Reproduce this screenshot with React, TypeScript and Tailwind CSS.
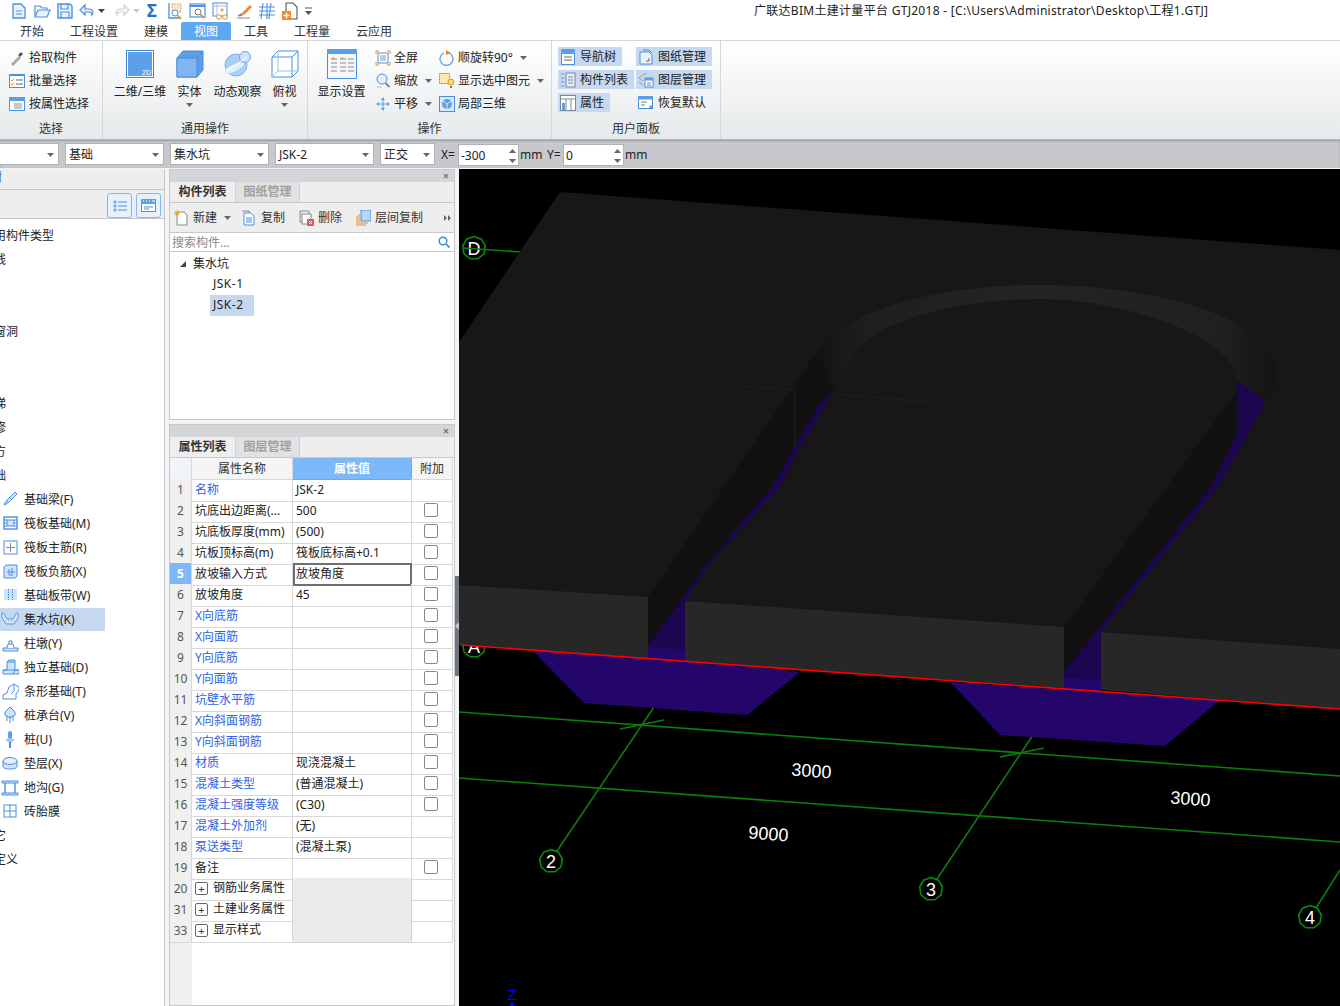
import type { ReactNode } from 'react'

const BLUE = '#4a90e2'
const LIGHT = '#cfe3f9'
const MID = '#5b9fe8'

function Ico({ w = 18, h = 18, children }: { w?: number; h?: number; children: ReactNode }) {
  return (
    <svg width={w} height={h} viewBox={`0 0 ${w} ${h}`} className="shrink-0" fill="none">
      {children}
    </svg>
  )
}

function Caret({ className = 'text-[#555]' }: { className?: string }) {
  return (
    <svg width="7" height="4" viewBox="0 0 7 4" className={`shrink-0 ${className}`}>
      <path d="M0 0h7L3.5 4z" fill="currentColor" />
    </svg>
  )
}

// quick access bar
const quickIcons: ReactNode[] = [
  <Ico key="new">
    <path d="M3 2h8l4 4v10H3z" fill="#e8f2fd" stroke={BLUE} strokeWidth="1.3" />
    <path d="M6 9h6M6 12h6" stroke={BLUE} />
  </Ico>,
  <Ico key="open">
    <path d="M2 14V4h5l2 2h5v2" stroke={BLUE} strokeWidth="1.2" />
    <path d="M2 15l3-7h12l-3 7z" fill="#e8f2fd" stroke={BLUE} strokeWidth="1.2" />
  </Ico>,
  <Ico key="save">
    <path d="M2 2h12l2 2v12H2z" fill="#e8f2fd" stroke={BLUE} strokeWidth="1.4" />
    <path d="M5 2v5h7V2M5 16v-6h8v6" stroke={BLUE} strokeWidth="1.2" />
  </Ico>,
]

function QuickBar() {
  return (
    <div className="flex items-center h-[22px] pl-[10px]">
      <div className="flex gap-[5px]">{quickIcons}</div>
      <div className="flex items-center ml-[4px]">
        <Ico>
          <path d="M7 3L2 8l5 5V10h4c2 0 3 1 3 3 2-3 1-6-3-6H7z" fill="#e8f2fd" stroke={BLUE} strokeWidth="1.2" />
        </Ico>
        <Caret className="text-[#444] ml-[2px]" />
      </div>
      <div className="flex items-center ml-[8px]">
        <Ico>
          <path d="M11 3l5 5-5 5V10H7c-2 0-3 1-3 3-2-3-1-6 3-6h4z" fill="#fafafa" stroke="#d0d0d0" strokeWidth="1.2" />
        </Ico>
        <Caret className="text-[#c8c8c8] ml-[2px]" />
      </div>
      <span className="ml-[3px] w-[18px] text-center text-[#2a6fbe] text-[17px] leading-[18px] font-bold">Σ</span>
      <div className="flex gap-[5px] ml-[5px]">
        <Ico>
          <path d="M3 1v15h12" stroke={BLUE} strokeWidth="1.3" />
          <rect x="6" y="2" width="9" height="8" fill="#fbe3d0" stroke="#e08a3c" strokeWidth=".8" strokeDasharray="1.5 1" />
          <circle cx="9" cy="11" r="3" fill="#fff" stroke={BLUE} />
          <path d="M11 13l4 4" stroke="#ee9a22" strokeWidth="2" />
        </Ico>
        <Ico>
          <rect x="1" y="2" width="15" height="13" fill="#fff" stroke={BLUE} strokeWidth="1.2" />
          <path d="M1 4h15" stroke={BLUE} strokeWidth="2" />
          <circle cx="9" cy="10" r="3" fill="#fff" stroke="#777" />
          <path d="M11 12l4 4" stroke="#ee9a22" strokeWidth="2" />
        </Ico>
        <Ico>
          <rect x="1" y="1" width="14" height="13" fill="#fff" stroke={BLUE} strokeWidth="1" />
          <path d="M1 4h14M5 1v13" stroke="#9cc4ee" />
          <path d="M8 8h4M10 6v4" stroke="#ee9a22" />
          <circle cx="7" cy="15" r="2.3" fill="#fff" stroke="#d9902f" />
          <circle cx="13" cy="15" r="2.3" fill="#fff" stroke="#d9902f" />
        </Ico>
        <Ico>
          <path d="M7 11l8-8 2 2-8 8z" fill="#ee8a22" />
          <path d="M2 16h13" stroke="#888" />
          <path d="M3 14c0-2 3-2 4-3l1 2c-1 1-3 2-5 1z" fill="#888" />
        </Ico>
        <Ico>
          <path d="M5 1L3 17M13 1l-2 16M1 5h16M1 9h16M1 13h16" stroke={BLUE} strokeWidth="1.1" />
          <path d="M9 1v16" stroke={BLUE} strokeWidth="1.1" />
        </Ico>
        <Ico>
          <path d="M5 9V1h7l4 4v12h-6" fill="#fff" stroke="#555" strokeWidth="1.1" />
          <rect x="1" y="9" width="9" height="9" fill="#f08a24" />
          <path d="M5.5 10.5v6M2.5 13.5h6" stroke="#fff" strokeWidth="1.4" />
        </Ico>
      </div>
      <svg width="9" height="8" viewBox="0 0 9 8" className="ml-[5px]">
        <path d="M1 1h7" stroke="#555" />
        <path d="M1 4h7L4.5 8z" fill="#555" />
      </svg>
      <div className="absolute left-[754px] top-[3px] text-[12px] leading-[16px] tracking-[0.29px] text-[#222] whitespace-nowrap">
        广联达BIM土建计量平台 GTJ2018 - [C:\Users\Administrator\Desktop\工程1.GTJ]
      </div>
    </div>
  )
}

const tabs = ['开始', '工程设置', '建模', '视图', '工具', '工程量', '云应用']

function TabBar() {
  return (
    <div className="flex h-[19px] pl-[7px] border-b border-[#d4d6d9]">
      {tabs.map(t => (
        <div
          key={t}
          className={`px-[13px] text-[12px] leading-[20px] rounded-t-[2px] ${
            t === '视图' ? 'bg-[#5ea8f2] text-white' : 'text-[#333]'
          }`}
        >
          {t}
        </div>
      ))}
    </div>
  )
}

function Group({ w, label, children }: { w: number; label: string; children: ReactNode }) {
  return (
    <div className="flex flex-col border-r border-[#d5d8db] shrink-0" style={{ width: w }}>
      <div className="flex-1 flex">{children}</div>
      <div className="h-[21px] text-center text-[12px] leading-[22px] text-[#333]">{label}</div>
    </div>
  )
}

function BigBtn({ w, icon, label, caret }: { w: number; icon: ReactNode; label: string; caret?: boolean }) {
  return (
    <div className="flex flex-col items-center pt-[8px] shrink-0" style={{ width: w }}>
      <div className="h-[30px] flex items-center justify-center">{icon}</div>
      <div className="text-[12px] leading-[16px] mt-[5px] text-[#222] whitespace-nowrap">{label}</div>
      {caret && <Caret className="text-[#666] mt-[3px]" />}
    </div>
  )
}

function SmallBtn({ icon, label, caret, active, w, tight }: { icon: ReactNode; label: string; caret?: boolean; active?: boolean; w?: number; tight?: boolean }) {
  return (
    <div
      className={`flex items-center h-[19px] mb-[4px] text-[12px] text-[#222] whitespace-nowrap ${active ? 'bg-[#c6d9f1]' : ''}`}
      style={w ? { width: w } : undefined}
    >
      <span className={`w-[19px] flex shrink-0 ${tight ? 'justify-start' : 'justify-center'}`}>{icon}</span>
      <span className={tight ? '' : 'ml-[3px]'}>{label}</span>
      {caret && <Caret className="text-[#666] ml-[7px]" />}
    </div>
  )
}

const tableIcon = (
  <Ico w={30} h={30}>
    <rect x=".5" y=".5" width="29" height="29" fill="#f4f6f9" stroke={BLUE} />
    <rect x="0" y="0" width="30" height="5" fill={MID} />
    <path d="M4 10h6M4 14h6M4 18h6M4 22h6M13 10h6M13 14h6M13 18h6M13 22h6M21 10h6M21 14h6M21 18h6M21 22h6" stroke="#8a8a8a" />
    <path d="M4 9l1 1 2-2M13 9l1 1 2-2" stroke="#ee8a22" />
  </Ico>
)

function Ribbon() {
  return (
    <div className="flex h-[98px] bg-gradient-to-b from-white to-[#e6e9eb]">
      <Group w={103} label="选择">
        <div className="pt-[7px] pl-[7px]">
          <SmallBtn
            label="拾取构件"
            icon={
              <Ico w={16} h={16}>
                <path d="M2 14l8-8 2 2-8 8z" fill="#aaa" />
                <path d="M9 5l3-3 2 2-3 3z" fill="#555" />
              </Ico>
            }
          />
          <SmallBtn
            label="批量选择"
            icon={
              <Ico w={16} h={14}>
                <rect x=".5" y=".5" width="15" height="13" fill="#fff" stroke={BLUE} />
                <path d="M0 1h16" stroke={BLUE} strokeWidth="2" />
                <path d="M2 6l1 1 2-2M2 10l1 1 2-2" stroke="#ee8a22" />
                <path d="M7 6h7M7 10h7" stroke="#666" />
              </Ico>
            }
          />
          <SmallBtn
            label="按属性选择"
            icon={
              <Ico w={16} h={14}>
                <rect x=".5" y=".5" width="15" height="13" fill="#fff" stroke={BLUE} />
                <rect x="0" y="0" width="16" height="4" fill={MID} />
                <path d="M5 7h8M5 9h8M5 11h8" stroke="#777" strokeWidth=".8" />
              </Ico>
            }
          />
        </div>
      </Group>
      <Group w={205} label="通用操作">
        <div className="flex">
          <BigBtn
            w={74}
            label="二维/三维"
            icon={
              <Ico w={28} h={28}>
                <rect x=".5" y=".5" width="27" height="27" fill="#fff" stroke="#3e86d8" />
                <rect x="2" y="2" width="24" height="24" fill="#5d9fe9" />
                <text x="25" y="25" fill="#fff" fontSize="7" textAnchor="end" fontFamily="'Liberation Sans', sans-serif">
                  2D
                </text>
              </Ico>
            }
          />
          <BigBtn
            w={25}
            label="实体"
            caret
            icon={
              <Ico w={28} h={28}>
                <path d="M1 8l6-7h20v19l-6 7H1z" fill={MID} stroke="#4a8ad8" />
                <path d="M1 8h20v19H1z" fill="#80b5f0" stroke="#4a8ad8" />
                <path d="M21 8l6-7" stroke="#4a8ad8" />
              </Ico>
            }
          />
          <BigBtn
            w={71}
            label="动态观察"
            icon={
              <Ico w={29} h={26}>
                <circle cx="13" cy="14" r="11" fill="#a9cdf4" stroke="#7eb0ea" />
                <ellipse cx="11" cy="17" rx="11" ry="3.5" transform="rotate(-25 11 17)" fill="#e1eefb" />
                <circle cx="22" cy="6" r="5.5" fill="#cfe3f9" stroke="#6aa5e8" />
                <path d="M4 20L24 6" stroke="#fff" />
              </Ico>
            }
          />
          <BigBtn
            w={23}
            label="俯视"
            caret
            icon={
              <Ico w={28} h={28}>
                <path d="M1 7l6-6h20v20l-6 6H1z" fill="#fff" stroke={BLUE} />
                <path d="M1 7h20v20M21 7l6-6" stroke={BLUE} />
                <path d="M7 1v20h20M7 21l-6 6" stroke="#9cc4ee" />
              </Ico>
            }
          />
        </div>
      </Group>
      <Group w={244} label="操作">
        <div className="flex">
          <BigBtn w={67} label="显示设置" icon={tableIcon} />
          <div className="pt-[7px] w-[64px] shrink-0">
            <SmallBtn
              tight
              label="全屏"
              icon={
                <Ico w={16} h={16}>
                  <path d="M1 4V1h3M12 1h3v3M15 12v3h-3M4 15H1v-3" stroke="#ee8a22" />
                  <rect x="3" y="3" width="10" height="10" fill="#fff" stroke={BLUE} />
                  <path d="M5 6h6M5 8h6M5 10h6" stroke="#777" strokeWidth=".8" />
                </Ico>
              }
            />
            <SmallBtn
              tight
              label="缩放"
              caret
              icon={
                <Ico w={16} h={16}>
                  <circle cx="7" cy="6" r="5" fill="#e8f2fd" stroke={BLUE} />
                  <path d="M10.5 10l4 4" stroke="#888" strokeWidth="2" />
                  <path d="M2 14h4" stroke="#ee8a22" strokeDasharray="1.5 1" />
                </Ico>
              }
            />
            <SmallBtn
              tight
              label="平移"
              caret
              icon={
                <Ico w={16} h={16}>
                  <path d="M8 1l2 3H6zM8 15l2-3H6zM1 8l3-2v4zM15 8l-3-2v4z" fill={MID} />
                  <path d="M4 8h8M8 4v8" stroke={MID} />
                </Ico>
              }
            />
          </div>
          <div className="pt-[7px]">
            <SmallBtn
              tight
              label="顺旋转90°"
              caret
              icon={
                <Ico w={16} h={16}>
                  <path d="M10 3a6.5 6.5 0 1 1-5 0" stroke={MID} strokeWidth="1.3" />
                  <path d="M7 0l5 3-5 2z" fill="#ee8a22" />
                </Ico>
              }
            />
            <SmallBtn
              tight
              label="显示选中图元"
              caret
              icon={
                <Ico w={16} h={16}>
                  <rect x=".5" y=".5" width="10" height="10" fill="#fde9b0" stroke="#888" strokeDasharray="2 1" />
                  <circle cx="12" cy="9" r="3" fill="#ffd966" stroke="#c9a227" />
                  <path d="M11 13h2v2h-2z" fill="#777" />
                </Ico>
              }
            />
            <SmallBtn
              tight
              label="局部三维"
              icon={
                <Ico w={16} h={16}>
                  <rect x=".5" y=".5" width="15" height="15" fill="#dbe9f9" stroke={BLUE} />
                  <circle cx="8" cy="8" r="5" fill={MID} />
                  <path d="M8 8V13M4 5l4 3 4-3" stroke="#dbe9f9" />
                </Ico>
              }
            />
          </div>
        </div>
      </Group>
      <Group w={169} label="用户面板">
        <div className="flex pl-[6px] pt-[6px]">
          <div className="w-[78px] shrink-0">
            <SmallBtn
              w={64}
              active
              label="导航树"
              icon={
                <Ico w={14} h={16}>
                  <rect x=".5" y=".5" width="13" height="15" fill="#fff" stroke={BLUE} />
                  <rect x="0" y="0" width="14" height="5" fill={MID} />
                  <path d="M3 8h8M3 11h8" stroke="#666" />
                </Ico>
              }
            />
            <SmallBtn
              w={76}
              active
              label="构件列表"
              icon={
                <Ico w={16} h={16}>
                  <path d="M1 2h3M1 6h3M1 10h3M1 14h3" stroke={MID} />
                  <rect x="6" y="1" width="9" height="14" fill="#e5eefa" stroke="#7a8a9a" />
                  <path d="M8 5h5M8 8h5M8 11h5" stroke="#7a8a9a" />
                </Ico>
              }
            />
            <SmallBtn
              w={52}
              active
              label="属性"
              icon={
                <Ico w={16} h={16}>
                  <rect x=".5" y=".5" width="15" height="15" fill="#fff" stroke="#7a8a9a" />
                  <path d="M1 4h14M6 4v11M11 4v11" stroke="#7a8a9a" />
                  <rect x="2" y="8" width="3" height="7" fill={MID} />
                </Ico>
              }
            />
          </div>
          <div className="shrink-0">
            <SmallBtn
              w={76}
              active
              label="图纸管理"
              icon={
                <Ico w={16} h={16}>
                  <path d="M2 3h9l3 3v9H2z" fill="#eaf2fc" stroke={BLUE} />
                  <path d="M5 1h6l3 3" stroke={BLUE} />
                  <path d="M8 12h3v-3" stroke="#666" />
                </Ico>
              }
            />
            <SmallBtn
              w={76}
              active
              label="图层管理"
              icon={
                <Ico w={16} h={16}>
                  <path d="M1 6l5-4h3M1 6l4 3M1 10l4 3" stroke="#999" />
                  <rect x="7" y="6" width="8" height="9" fill="#fff" stroke={BLUE} />
                  <rect x="7" y="6" width="8" height="2.5" fill={MID} />
                  <path d="M9 11h4M9 13h4" stroke="#666" strokeWidth=".8" />
                </Ico>
              }
            />
            <SmallBtn
              w={76}
              label="恢复默认"
              icon={
                <Ico w={16} h={16}>
                  <rect x=".5" y="1.5" width="14" height="12" fill="#fff" stroke={BLUE} />
                  <rect x="0" y="1" width="15" height="3.5" fill={MID} />
                  <path d="M3 7h6M3 10h4" stroke="#777" />
                  <path d="M11 12h4M13 10v4" stroke="#3a7fd0" />
                </Ico>
              }
            />
          </div>
        </div>
      </Group>
    </div>
  )
}

function SelectBox({ w, value, className = '' }: { w: number; value: string; className?: string }) {
  return (
    <div
      className={`flex items-center justify-between h-[22px] pt-[1px] bg-white border border-[#b0b2b5] pl-[3px] pr-[4px] text-[12px] text-[#222] shrink-0 ${className}`}
      style={{ width: w }}
    >
      <span>{value}</span>
      <Caret className="text-[#666]" />
    </div>
  )
}

function Spin({ value }: { value: string }) {
  return (
    <div className="flex items-center justify-between w-[61px] h-[22px] pt-[1px] bg-white border border-[#b0b2b5] pl-[2px] pr-[2px] text-[12px] text-[#222] shrink-0">
      <span>{value}</span>
      <svg width="7" height="14" viewBox="0 0 7 14">
        <path d="M3.5 0L7 4H0zM3.5 14L0 10h7z" fill="#666" />
      </svg>
    </div>
  )
}

function ToolBar() {
  return (
    <div className="flex items-start gap-[6px] h-[29px] pt-[3px] bg-[#c6c8cb] border-t border-[#b4b6b9] shadow-[inset_0_1px_2px_#9a9c9f]">
      <SelectBox w={59} value="" className="border-l-0" />
      <SelectBox w={99} value="基础" />
      <SelectBox w={99} value="集水坑" />
      <SelectBox w={99} value="JSK-2" />
      <SelectBox w={55} value="正交" />
      <div className="flex items-center text-[12px] leading-[24px] text-[#222]">
        <span className="w-[17px]">X=</span>
        <Spin value="-300" />
        <span className="ml-[1px] w-[27px]">mm</span>
        <span className="w-[16px]">Y=</span>
        <Spin value="0" />
        <span className="ml-[1px]">mm</span>
      </div>
    </div>
  )
}

// left navigation tree
const navIcons: Record<string, ReactNode> = {
  基础梁: (
    <Ico>
      <path d="M3 15l2-4 9-9 2 2-9 9z" fill={LIGHT} stroke={BLUE} />
      <path d="M6 11l2 2M9 8l2 2" stroke={BLUE} />
    </Ico>
  ),
  筏板基础: (
    <Ico>
      <rect x="3" y="3" width="13" height="12" fill="#fff" stroke={BLUE} strokeWidth="1.4" />
      <rect x="6" y="6" width="7" height="6" fill={LIGHT} stroke={BLUE} />
      <path d="M3 6h3M3 9h3M3 12h3M13 6h3M13 9h3M13 12h3" stroke={BLUE} />
    </Ico>
  ),
  筏板主筋: (
    <Ico>
      <rect x="3" y="3" width="13" height="13" fill="#fff" stroke={BLUE} />
      <path d="M9.5 5v9M5 9.5h9" stroke="#888" />
    </Ico>
  ),
  筏板负筋: (
    <Ico>
      <path d="M3 5l2-2h11v11l-2 2H3z" fill={LIGHT} stroke={BLUE} />
      <path d="M8 7v6h4M11 6v6M6 10h8" stroke={BLUE} />
    </Ico>
  ),
  基础板带: (
    <Ico>
      <rect x="3" y="3" width="13" height="11" fill={LIGHT} />
      <path d="M7.5 3v11M11.5 3v11" stroke={BLUE} strokeDasharray="1.5 1" />
    </Ico>
  ),
  集水坑: (
    <Ico w={18} h={16}>
      <path d="M1 2c2 0 3 1 3 3l2 3h6l2-3c0-2 1-3 3-3v5l-4 6H5L1 7z" fill="#dce9f8" stroke={BLUE} strokeWidth=".9" />
      <path d="M4 10h10M6 12.5h6" stroke="#7fb0e8" strokeDasharray="1.5 1.5" />
    </Ico>
  ),
  柱墩: (
    <Ico>
      <path d="M2 14h15v3H2z" fill={LIGHT} stroke={BLUE} />
      <path d="M6 14l1-4h5l1 4M8 10V7h3v3" fill="#fff" stroke={BLUE} />
    </Ico>
  ),
  独立基础: (
    <Ico>
      <path d="M2 16v-4h4V4l2-2h6v10h4v4z" fill={LIGHT} stroke={BLUE} />
      <path d="M6 4h8M2 12h12l-2 4M14 12l4 0" stroke={BLUE} />
    </Ico>
  ),
  条形基础: (
    <Ico>
      <path d="M2 17v-4l4-2 2-6 5-3 5 3v3l-3 4v5z" fill="#fff" stroke={BLUE} />
      <path d="M13 2v7l-3 3" stroke={BLUE} />
    </Ico>
  ),
  桩承台: (
    <Ico>
      <path d="M9 1l5 5v3l-5 3-5-3V6z" fill={LIGHT} stroke={BLUE} />
      <path d="M6 10v5M9 10v7M12 10v5" stroke={BLUE} />
    </Ico>
  ),
  桩: (
    <Ico>
      <rect x="7" y="1" width="4" height="8" rx="2" fill={MID} />
      <path d="M4 9h10l-5 5z" fill={MID} opacity=".6" />
      <path d="M9 12v6" stroke={BLUE} strokeWidth="2" />
    </Ico>
  ),
  垫层: (
    <Ico>
      <path d="M2 7v5c0 2 3 3 7 3s7-1 7-3V7" fill={LIGHT} stroke={BLUE} />
      <ellipse cx="9" cy="7" rx="7" ry="3.5" fill="#e4effb" stroke={BLUE} />
    </Ico>
  ),
  地沟: (
    <Ico>
      <path d="M1 3h16v2H1zM1 15h16v2H1z" fill={LIGHT} stroke={BLUE} />
      <path d="M4 5v10M14 5v10" stroke={BLUE} strokeWidth="1.4" />
    </Ico>
  ),
  砖胎膜: (
    <Ico>
      <rect x="3" y="3" width="12" height="12" fill="#fff" stroke={BLUE} />
      <path d="M3 9h12M9 3v12" stroke={BLUE} />
    </Ico>
  ),
}
const navLabels: [string, string][] = [
  ['基础梁', '(F)'],
  ['筏板基础', '(M)'],
  ['筏板主筋', '(R)'],
  ['筏板负筋', '(X)'],
  ['基础板带', '(W)'],
  ['集水坑', '(K)'],
  ['柱墩', '(Y)'],
  ['独立基础', '(D)'],
  ['条形基础', '(T)'],
  ['桩承台', '(V)'],
  ['桩', '(U)'],
  ['垫层', '(X)'],
  ['地沟', '(G)'],
  ['砖胎膜', ''],
]

function CutRow({ label }: { label: string }) {
  return <div className="h-[24px] leading-[26px] whitespace-nowrap text-[12px] text-[#222] ml-[-18px]">{label}</div>
}

function LeftPanel() {
  return (
    <aside className="w-[165px] shrink-0 flex flex-col border-r border-[#c4c6cc] bg-white overflow-hidden">
      <div className="h-[21px] bg-[#eeeeee] border-b border-[#c8c8cc] text-[12px] leading-[18px] text-[#3a6ea8] ml-[-34px] whitespace-nowrap">
        导航树
      </div>
      <div className="h-[29px] bg-[#eeeeee] border-b border-[#c8c8cc] flex justify-end items-start gap-[4px] pt-[3px] pr-[3px]">
        <div className="w-[25px] h-[25px] bg-[#e6f1fc] border border-[#7fb8f5] rounded-[3px] flex items-center justify-center">
          <Ico w={14} h={14}>
            <path d="M1 2h2v2H1zM1 6h2v2H1zM1 10h2v2H1z" stroke={BLUE} strokeWidth=".8" />
            <path d="M5 3h9M5 7h9M5 11h9" stroke={BLUE} />
          </Ico>
        </div>
        <div className="w-[25px] h-[25px] bg-[#e6f1fc] border border-[#7fb8f5] rounded-[3px] flex items-center justify-center">
          <Ico w={15} h={13}>
            <rect x=".5" y=".5" width="14" height="12" fill="#fff" stroke={BLUE} />
            <rect x="0" y="0" width="15" height="5" fill={MID} />
            <path d="M3 8h9M3 10h5" stroke={BLUE} />
            <path d="M2 2h1M5 2h1M8 2h1M11 2h3" stroke="#fff" />
          </Ico>
        </div>
      </div>
      <div className="pt-[4px] flex-1">
        <CutRow label="常用构件类型" />
        {['轴线', '柱', '墙', '门窗洞', '梁', '板', '楼梯', '装修', '土方', '基础'].map(l => (
          <CutRow key={l} label={l} />
        ))}
        {navLabels.map(([name, key]) => (
          <div key={name} className="h-[24px] flex items-center w-[105px]">
            <div className={`flex items-center h-[23px] w-full ${name === '集水坑' ? 'bg-[#c6d8f0]' : ''}`}>
              <span className="w-[24px] pl-[1px] shrink-0">{navIcons[name]}</span>
              <span className="text-[12px] leading-[25px] text-[#222] whitespace-nowrap">
                {name}
                {key}
              </span>
            </div>
          </div>
        ))}
        <CutRow label="其它" />
        <CutRow label="自定义" />
      </div>
    </aside>
  )
}

function PanelHead({ tabA, tabB }: { tabA: string; tabB: string }) {
  return (
    <>
      <div className="h-[12px] bg-[#d4d5d9] flex justify-end pr-[5px] text-[#777] text-[11px] leading-[11px] font-bold">×</div>
      <div className="h-[21px] flex bg-[#eeeeee] border-b border-[#c8c8cc]">
        <div className="w-[65px] text-center text-[12px] leading-[20px] font-bold text-[#333]">{tabA}</div>
        <div className="w-[65px] text-center text-[12px] leading-[20px] font-bold text-[#a0a0a0] bg-[#e2e2e2] border-x border-[#d0d0d0]">{tabB}</div>
      </div>
    </>
  )
}

function ListPanel() {
  return (
    <div className="h-[251px] bg-white border border-[#c8c8cc] flex flex-col">
      <PanelHead tabA="构件列表" tabB="图纸管理" />
      <div className="h-[30px] flex items-center bg-[#eeeeee] border-b border-[#c8c8cc] pl-[4px] text-[12px] text-[#333] whitespace-nowrap">
        <Ico w={15} h={16}>
          <path d="M3 2h7l3 3v10H3z" fill="#fff" stroke="#888" />
          <path d="M1 1l4 4M5 1L1 5M3 0v6M0 3h6" stroke="#ee9a22" />
        </Ico>
        <span className="ml-[4px]">新建</span>
        <Caret className="text-[#666] ml-[7px]" />
        <span className="ml-[10px]">
          <Ico w={14} h={16}>
            <path d="M1 1h7v2" stroke="#888" />
            <path d="M3 3h7l3 3v9H3z" fill="#fff" stroke={BLUE} />
            <path d="M5 8h6M5 10h6M5 12h6" stroke={BLUE} />
          </Ico>
        </span>
        <span className="ml-[6px]">复制</span>
        <span className="ml-[14px]">
          <Ico w={15} h={16}>
            <path d="M1 1h9v3M1 1v11h2" stroke="#888" />
            <rect x="3" y="4" width="9" height="10" fill="#fff" stroke="#888" />
            <rect x="8" y="9" width="7" height="7" fill="#dd5a5a" />
            <path d="M10 11l3 3M13 11l-3 3" stroke="#fff" />
          </Ico>
        </span>
        <span className="ml-[4px]">删除</span>
        <span className="ml-[14px]">
          <Ico w={15} h={16}>
            <path d="M1 6v9h9M3 4v9h9" stroke="#ee8a22" />
            <rect x="5" y="0" width="10" height="11" fill="#b6d6f8" stroke={BLUE} />
          </Ico>
        </span>
        <span className="ml-[4px]">层间复制</span>
        <svg width="7" height="6" viewBox="0 0 7 6" className="ml-[21px]">
          <path d="M0 0l3 3-3 3zM4 0l3 3-3 3z" fill="#666" />
        </svg>
      </div>
      <div className="h-[19px] flex items-center justify-between border-b border-[#c8c8cc] pl-[2px] pr-[4px] text-[12px] text-[#8a8a8a]">
        <span className="pt-[1px]">搜索构件...</span>
        <Ico w={12} h={12}>
          <circle cx="5" cy="5" r="3.8" stroke="#3a8ac8" strokeWidth="1.4" />
          <path d="M8 8l3.5 3.5" stroke="#3a8ac8" strokeWidth="1.6" />
        </Ico>
      </div>
      <div className="pt-[1px] text-[12px] text-[#222]">
        <div className="h-[21px] flex items-center pl-[10px]">
          <svg width="6" height="6" viewBox="0 0 6 6">
            <path d="M6 0v6H0z" fill="#444" />
          </svg>
          <span className="ml-[7px]">集水坑</span>
        </div>
        <div className="h-[21px] leading-[20px] pl-[43px] tracking-[0.5px]">JSK-1</div>
        <div className="ml-[40px] w-[44px] h-[21px] leading-[20px] pl-[3px] bg-[#c6d8f0] tracking-[0.5px]">JSK-2</div>
      </div>
    </div>
  )
}

type Row = { n: number; name: string; value?: string; blue?: boolean; check?: boolean; group?: boolean }
const rows: Row[] = [
  { n: 1, name: '名称', value: 'JSK-2', blue: true },
  { n: 2, name: '坑底出边距离(...', value: '500', check: true },
  { n: 3, name: '坑底板厚度(mm)', value: '(500)', check: true },
  { n: 4, name: '坑板顶标高(m)', value: '筏板底标高+0.1', check: true },
  { n: 5, name: '放坡输入方式', value: '放坡角度', check: true },
  { n: 6, name: '放坡角度', value: '45', check: true },
  { n: 7, name: 'X向底筋', blue: true, check: true },
  { n: 8, name: 'X向面筋', blue: true, check: true },
  { n: 9, name: 'Y向底筋', blue: true, check: true },
  { n: 10, name: 'Y向面筋', blue: true, check: true },
  { n: 11, name: '坑壁水平筋', blue: true, check: true },
  { n: 12, name: 'X向斜面钢筋', blue: true, check: true },
  { n: 13, name: 'Y向斜面钢筋', blue: true, check: true },
  { n: 14, name: '材质', value: '现浇混凝土', blue: true, check: true },
  { n: 15, name: '混凝土类型', value: '(普通混凝土)', blue: true, check: true },
  { n: 16, name: '混凝土强度等级', value: '(C30)', blue: true, check: true },
  { n: 17, name: '混凝土外加剂', value: '(无)', blue: true },
  { n: 18, name: '泵送类型', value: '(混凝土泵)', blue: true },
  { n: 19, name: '备注', check: true },
  { n: 20, name: '钢筋业务属性', group: true },
  { n: 31, name: '土建业务属性', group: true },
  { n: 33, name: '显示样式', group: true },
]

function PropRow({ row }: { row: Row }) {
  const sel = row.n === 5
  return (
    <div className="grid grid-cols-[22px_101px_119px_41px] h-[21px] text-[12px] leading-[22px]">
      <div className={`text-center border-r border-b border-[#d8d8d8] ${sel ? 'bg-[#7db8f8] text-white font-bold' : 'bg-[#f0f0f0] text-[#555]'}`}>
        {row.n}
      </div>
      <div className={`border-r border-b border-[#d8d8d8] pl-[3px] whitespace-nowrap overflow-hidden ${row.blue ? 'text-[#2f62e6]' : 'text-[#222]'}`}>
        {row.group ? (
          <span className="flex items-center h-[20px]">
            <span className="flex items-center justify-center w-[13px] h-[13px] border border-[#666] rounded-[2px] text-[11px] leading-[11px] text-[#333]">+</span>
            <span className="ml-[5px]">{row.name}</span>
          </span>
        ) : (
          row.name
        )}
      </div>
      {sel ? (
        <div className="border-2 border-[#6f6f6f] pl-[1px] leading-[18px] text-[#222] whitespace-nowrap">{row.value}</div>
      ) : (
        <div className={`border-r border-b pl-[3px] text-[#222] whitespace-nowrap ${row.group ? 'bg-[#ebebeb] border-[#d4d4d4]' : 'border-[#d8d8d8]'}`}>
          {row.value}
        </div>
      )}
      <div className="border-r border-b border-[#d8d8d8] flex items-center justify-center pr-[2px] pb-[2px]">
        {row.check && <span className="w-[14px] h-[14px] border border-[#888] rounded-[2px] bg-white" />}
      </div>
    </div>
  )
}

function PropPanel() {
  return (
    <div className="flex-1 min-h-0 bg-white border border-[#c8c8cc] flex flex-col overflow-hidden">
      <PanelHead tabA="属性列表" tabB="图层管理" />
      <div className="flex-1 flex flex-col bg-[linear-gradient(90deg,#f0f0f0_22px,#fff_22px)]">
        <div className="grid grid-cols-[22px_101px_119px_41px] h-[21px] text-[12px] leading-[21px] text-center text-[#333]">
          <div className="bg-[#f1f4f8] border-r border-b border-[#d8d8d8]" />
          <div className="bg-[#f5f5f5] border-r border-b border-[#d8d8d8]">属性名称</div>
          <div className="bg-[#7db8f8] text-white font-bold border-r border-b border-[#6aa8ee]">属性值</div>
          <div className="bg-[#f5f5f5] border-r border-b border-[#d8d8d8]">附加</div>
        </div>
        {rows.map(r => (
          <PropRow key={r.n} row={r} />
        ))}
      </div>
    </div>
  )
}

function Bubble({ x, y, r = 11.5, label }: { x: number; y: number; r?: number; label: string }) {
  const pts = Array.from({ length: 9 }, (_, i) => {
    const a = (i / 9) * Math.PI * 2 - Math.PI / 2
    return `${(x + r * Math.cos(a)).toFixed(1)},${(y + r * Math.sin(a)).toFixed(1)}`
  }).join(' ')
  return (
    <>
      <polygon points={pts} fill="none" stroke="#0a8a0a" strokeWidth="1.6" />
      <text x={x} y={y + 6.5} fill="#fff" fontSize="18" textAnchor="middle" fontFamily="'Liberation Sans', sans-serif">
        {label}
      </text>
    </>
  )
}

function Dim({ x, y, label }: { x: number; y: number; label: string }) {
  return (
    <text x={x} y={y} fill="#fff" fontSize="18" textAnchor="middle" transform={`rotate(4 ${x} ${y})`} fontFamily="'Liberation Sans', sans-serif">
      {label}
    </text>
  )
}

function Viewport() {
  const G = '#0b7f0b'
  return (
    <div className="flex-1 min-w-0 bg-black">
      <svg viewBox="459 169 881 837" width="881" height="837" className="block">
        <defs>
          <linearGradient id="ring" gradientUnits="userSpaceOnUse" x1="816" y1="0" x2="1276" y2="0">
            <stop offset="0" stopColor="#111111" />
            <stop offset="0.1" stopColor="#1e1e1e" />
            <stop offset="0.45" stopColor="#242424" />
            <stop offset="0.88" stopColor="#202020" />
            <stop offset="1" stopColor="#131313" />
          </linearGradient>
        </defs>
        {/* axis bubbles and grid */}
        <Bubble x={474} y={248} label="D" />
        <path d="M463 248L520 252" stroke={G} strokeWidth="1.6" />
        <Bubble x={474} y={646} label="A" />
        <path d="M459 712L1340 776M459 778L1340 842" stroke={G} strokeWidth="1.6" />
        <path d="M685 661L557 851M1063 690L937 879M1340 870L1316 908" stroke={G} strokeWidth="1.6" />
        <path d="M620 729L664 720M1000 757L1044 748" stroke={G} strokeWidth="1.6" />
        <Bubble x={551} y={861} label="2" />
        <Bubble x={931} y={889} label="3" />
        <Bubble x={1310} y={917} label="4" />
        <Dim x={811} y={777} label="3000" />
        <Dim x={1190} y={805} label="3000" />
        <Dim x={768} y={840} label="9000" />
        {/* purple pits below the slab */}
        <path d="M533 651L584 703L747 715L800 672L685 660z" fill="#24066b" />
        <path d="M950 682L1000 735L1165 746L1220 700z" fill="#24066b" />
        {/* slab top */}
        <path d="M560 192L1340 250V650L459 585V342z" fill="#171717" />
        {/* round end of the recess */}
        <path
          d="M816 353C850 305 950 285 1038 285C1140 285 1270 310 1276 374Q1275 390 1266 402L1237 380C1237 340 1130 299 1038 299C950 299 870 325 855 353L834 391L818 406z"
          fill="url(#ring)"
        />
        {/* left channel */}
        <path d="M648 597L816 353L834 391L818 406L795 446L772 487L710 560L648 645z" fill="#111111" />
        <path d="M834 391L818 406L795 446L772 487L710 560L648 645V661L685 664V601L713 560L780 487L800 447z" fill="#1b064f" />
        <path d="M648 647L685 650V664L648 661z" fill="#24066b" />
        {/* right channel */}
        <path d="M1064 627L1237 391V433L1211 487L1064 672z" fill="#111111" />
        <path d="M1237 380L1266 402L1218 487L1101 632V680L1064 677V672L1211 487L1237 433z" fill="#1b064f" />
        <path d="M1064 677L1101 680V692L1064 690z" fill="#24066b" />
        {/* front faces */}
        <path d="M459 585L648 597V658L459 645z" fill="#272727" />
        <path d="M685 601L1064 627V688L685 661z" fill="#272727" />
        <path d="M1101 632L1340 649V709L1101 690z" fill="#272727" />
        {/* faint hidden grid */}
        <path d="M740 386L795 390V447M834 394L929 402" fill="none" stroke="#22220f" />
        <path d="M461 645L1340 709" stroke="#ff0000" strokeWidth="1.6" />
        <text x="512" y="1000" fill="#0000ff" fontSize="15" textAnchor="middle" fontFamily="'Liberation Sans', sans-serif">
          Z
        </text>
        <path d="M512 1001L515 1006H509z" fill="#0000ff" />
      </svg>
    </div>
  )
}

export default function App() {
  return (
    <div className="relative w-[1340px] h-[1006px] overflow-hidden flex flex-col bg-white font-['Noto_Sans','Noto_Sans_CJK_SC',sans-serif]">
      <QuickBar />
      <TabBar />
      <Ribbon />
      <ToolBar />
      <div className="flex flex-1 min-h-0 bg-[#f4f4f4] pt-[1px]">
        <LeftPanel />
        <div className="w-[290px] shrink-0 flex flex-col gap-[4px] pl-[4px]">
          <ListPanel />
          <PropPanel />
        </div>
        <div className="w-[4px] shrink-0 flex flex-col pt-[407px]">
          <div className="h-[100px] bg-[#6e7780] flex items-center">
            <svg width="4" height="8" viewBox="0 0 4 8">
              <path d="M4 0v8L0 4z" fill="#c8ccd0" />
            </svg>
          </div>
        </div>
        <Viewport />
      </div>
    </div>
  )
}
